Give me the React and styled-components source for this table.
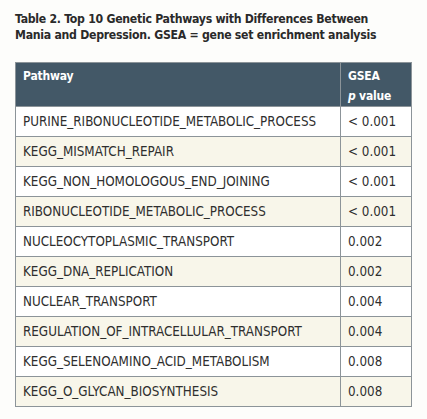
import React from "react";
import styled, { createGlobalStyle } from "styled-components";

const GlobalStyle = createGlobalStyle`
  body {
    margin: 0;
    background: #fdfdfb;
    font-family: "DejaVu Sans Condensed", "Liberation Sans", sans-serif;
    color: #2b2b2b;
  }
`;

const Page = styled.div`
  width: 427px;
  height: 419px;
  padding: 11px 15px 0 15px;
  box-sizing: border-box;
`;

const Title = styled.h2`
  margin: 0 0 19px 0;
  font-size: 12.2px;
  line-height: 16px;
  font-weight: bold;
  letter-spacing: -0.28px;
  color: #2a2a2a;
  white-space: nowrap;
`;

const Table = styled.table`
  width: 397px;
  border-collapse: collapse;
  border: 1px solid #8c9499;
`;

const HeadCell = styled.th`
  background: #435867;
  color: #fff;
  text-align: left;
  vertical-align: top;
  font-size: 12px;
  font-weight: bold;
  letter-spacing: -0.2px;
  line-height: 20px;
  height: 42px;
  box-sizing: border-box;
  padding: 3px 7px 0 7px;
  border-right: 1px solid #8c9499;
  width: ${(p) => p.$w || "auto"};

  i {
    font-weight: bold;
  }
`;

const Row = styled.tr`
  background: ${(p) => (p.$alt ? "#f8f6ea" : "#ffffff")};
  border-top: 1px solid #8c9499;
`;

const Cell = styled.td`
  height: 30px;
  box-sizing: border-box;
  padding: 0 7px;
  font-size: 13.3px;
  color: #2e2e2e;
  border-right: 1px solid #8c9499;
  white-space: nowrap;
`;

const rows = [
  ["PURINE_RIBONUCLEOTIDE_METABOLIC_PROCESS", "< 0.001"],
  ["KEGG_MISMATCH_REPAIR", "< 0.001"],
  ["KEGG_NON_HOMOLOGOUS_END_JOINING", "< 0.001"],
  ["RIBONUCLEOTIDE_METABOLIC_PROCESS", "< 0.001"],
  ["NUCLEOCYTOPLASMIC_TRANSPORT", "0.002"],
  ["KEGG_DNA_REPLICATION", "0.002"],
  ["NUCLEAR_TRANSPORT", "0.004"],
  ["REGULATION_OF_INTRACELLULAR_TRANSPORT", "0.004"],
  ["KEGG_SELENOAMINO_ACID_METABOLISM", "0.008"],
  ["KEGG_O_GLYCAN_BIOSYNTHESIS", "0.008"],
];

export default function App() {
  return (
    <Page>
      <GlobalStyle />
      <Title>
        Table 2. Top 10 Genetic Pathways with Differences Between
        <br />
        Mania and Depression. GSEA = gene set enrichment analysis
      </Title>
      <Table>
        <thead>
          <tr>
            <HeadCell>Pathway</HeadCell>
            <HeadCell $w="71px">
              GSEA
              <br />
              <i>p</i> value
            </HeadCell>
          </tr>
        </thead>
        <tbody>
          {rows.map(([name, p], i) => (
            <Row key={name} $alt={i % 2 === 1}>
              <Cell>{name}</Cell>
              <Cell>{p}</Cell>
            </Row>
          ))}
        </tbody>
      </Table>
    </Page>
  );
}
